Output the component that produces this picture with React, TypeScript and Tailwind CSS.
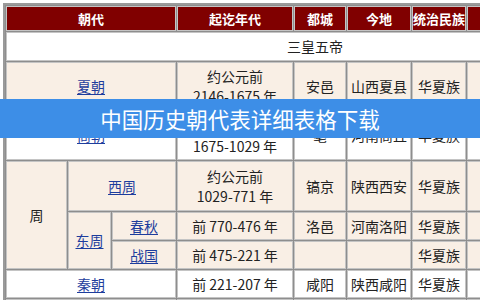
const beige = "bg-[#f9efe5]";
const white = "bg-white";

// cell base: thin light border inside a darker spacing grid
const td = "border border-[#c4c4c4] p-0 text-center align-middle";

function Dyn({ name }: { name: string }) {
  return (
    <a href="#" className="text-[#1d3d9d] underline underline-offset-2">
      {name}
    </a>
  );
}

function TwoLine({ a, b }: { a: string; b: string }) {
  return (
    <div className="leading-[20px]">
      <div>{a}</div>
      <div>{b}</div>
    </div>
  );
}

export default function App() {
  return (
    <div
      className="relative w-[480px] h-[300px] overflow-hidden bg-white pl-[3px] pt-[3px]"
      style={{ fontFamily: '"Noto Sans CJK SC", "Noto Sans", sans-serif' }}
    >
      <table className="table-fixed w-[624px] border-separate border-spacing-[1px] border-2 border-[#9a9a9a] bg-[#8e8e8e] text-[14px] text-[#222]">
        <colgroup>
          <col className="w-[61px]" />
          <col className="w-[43px]" />
          <col className="w-[64px]" />
          <col className="w-[116px]" />
          <col className="w-[52px]" />
          <col className="w-[64px]" />
          <col className="w-[54px]" />
          <col className="w-[157px]" />
        </colgroup>
        <tbody>
          <tr className="h-[25px] text-white text-[13px] font-bold">
            <td colSpan={3} className={`${td} bg-[#800000]`}>朝代</td>
            <td className={`${td} bg-[#800000]`}>起讫年代</td>
            <td className={`${td} bg-[#800000]`}>都城</td>
            <td className={`${td} bg-[#800000]`}>今地</td>
            <td className={`${td} bg-[#800000]`}>统治民族</td>
            <td className={`${td} bg-[#800000]`}></td>
          </tr>
          <tr className="h-[29px]">
            <td colSpan={8} className={`${td} ${white}`}>三皇五帝</td>
          </tr>
          <tr className="h-[48px]">
            <td colSpan={3} className={`${td} ${beige}`}><Dyn name="夏朝" /></td>
            <td className={`${td} ${beige}`}><TwoLine a="约公元前" b="2146-1675 年" /></td>
            <td className={`${td} ${beige}`}>安邑</td>
            <td className={`${td} ${beige}`}>山西夏县</td>
            <td className={`${td} ${beige}`}>华夏族</td>
            <td className={`${td} ${beige}`}></td>
          </tr>
          <tr className="h-[49px]">
            <td colSpan={3} className={`${td} ${white}`}><Dyn name="商朝" /></td>
            <td className={`${td} ${white}`}><TwoLine a="约公元前" b="1675-1029 年" /></td>
            <td className={`${td} ${white}`}>亳</td>
            <td className={`${td} ${white}`}>河南商丘</td>
            <td className={`${td} ${white}`}>华夏族</td>
            <td className={`${td} ${white}`}></td>
          </tr>
          <tr className="h-[50px]">
            <td rowSpan={3} className={`${td} ${beige}`}>周</td>
            <td colSpan={2} className={`${td} ${beige}`}><Dyn name="西周" /></td>
            <td className={`${td} ${beige}`}><TwoLine a="约公元前" b="1029-771 年" /></td>
            <td className={`${td} ${beige}`}>镐京</td>
            <td className={`${td} ${beige}`}>陕西西安</td>
            <td className={`${td} ${beige}`}>华夏族</td>
            <td className={`${td} ${beige}`}></td>
          </tr>
          <tr className="h-[28px]">
            <td rowSpan={2} className={`${td} ${beige}`}><Dyn name="东周" /></td>
            <td className={`${td} ${beige}`}><Dyn name="春秋" /></td>
            <td className={`${td} ${beige}`}>前 770-476 年</td>
            <td className={`${td} ${beige}`}>洛邑</td>
            <td className={`${td} ${beige}`}>河南洛阳</td>
            <td className={`${td} ${beige}`}>华夏族</td>
            <td className={`${td} ${beige}`}></td>
          </tr>
          <tr className="h-[28px]">
            <td className={`${td} ${beige}`}><Dyn name="战国" /></td>
            <td className={`${td} ${beige}`}>前 475-221 年</td>
            <td className={`${td} ${beige}`}></td>
            <td className={`${td} ${beige}`}></td>
            <td className={`${td} ${beige}`}>华夏族</td>
            <td className={`${td} ${beige}`}></td>
          </tr>
          <tr className="h-[28px]">
            <td colSpan={3} className={`${td} ${white}`}><Dyn name="秦朝" /></td>
            <td className={`${td} ${white}`}>前 221-207 年</td>
            <td className={`${td} ${white}`}>咸阳</td>
            <td className={`${td} ${white}`}>陕西咸阳</td>
            <td className={`${td} ${white}`}>华夏族</td>
            <td className={`${td} ${white}`}></td>
          </tr>
          <tr className="h-[28px]">
            <td colSpan={3} className={`${td} ${beige}`}></td>
            <td className={`${td} ${beige}`}></td>
            <td className={`${td} ${beige}`}></td>
            <td className={`${td} ${beige}`}></td>
            <td className={`${td} ${beige}`}></td>
            <td className={`${td} ${beige}`}></td>
          </tr>
        </tbody>
      </table>

      {/* title banner over the table */}
      <div className="absolute left-0 top-[99px] flex h-[39px] w-full items-center justify-center bg-[#3d8ee7]">
        <span className="text-[21.5px] leading-none text-white">中国历史朝代表详细表格下载</span>
      </div>
    </div>
  );
}
